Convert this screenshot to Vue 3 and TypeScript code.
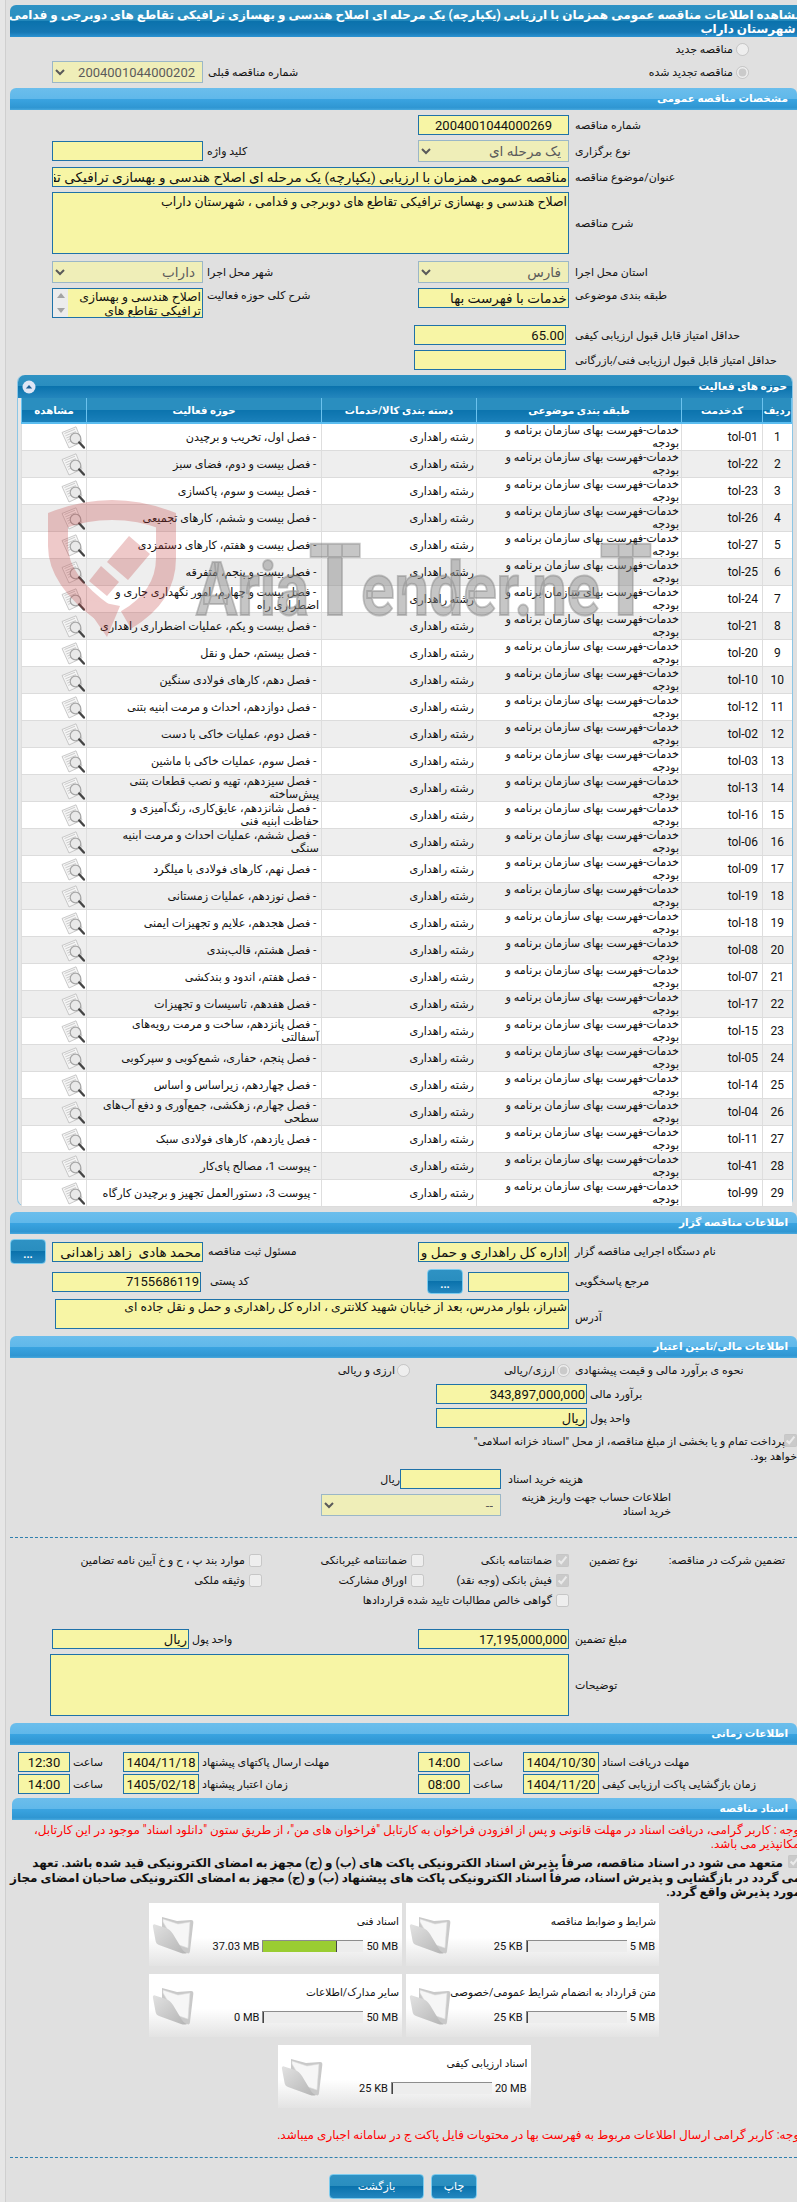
<script setup lang="ts">
const activities: [string, string][] = [
  ['tol-01', 'فصل اول، تخریب و برچیدن'],
  ['tol-22', 'فصل بیست و دوم، فضای سبز'],
  ['tol-23', 'فصل بیست و سوم، پاکسازی'],
  ['tol-26', 'فصل بیست و ششم، کارهای تجمیعی'],
  ['tol-27', 'فصل بیست و هفتم، کارهای دستمزدی'],
  ['tol-25', 'فصل بیست و پنجم، متفرقه'],
  ['tol-24', 'فصل بیست و چهارم، امور نگهداری جاری و اضطراری راه'],
  ['tol-21', 'فصل بیست و یکم، عملیات اضطراری راهداری'],
  ['tol-20', 'فصل بیستم، حمل و نقل'],
  ['tol-10', 'فصل دهم، کارهای فولادی سنگین'],
  ['tol-12', 'فصل دوازدهم، احداث و مرمت ابنیه بتنی'],
  ['tol-02', 'فصل دوم، عملیات خاکی با دست'],
  ['tol-03', 'فصل سوم، عملیات خاکی با ماشین'],
  ['tol-13', 'فصل سیزدهم، تهیه و نصب قطعات بتنی پیش‌ساخته'],
  ['tol-16', 'فصل شانزدهم، عایق‌کاری، رنگ‌آمیزی و حفاظت ابنیه فنی'],
  ['tol-06', 'فصل ششم،  عملیات احداث و مرمت ابنیه سنگی'],
  ['tol-09', 'فصل نهم، کارهای فولادی با میلگرد'],
  ['tol-19', 'فصل نوزدهم، عملیات زمستانی'],
  ['tol-18', 'فصل هجدهم، علایم و تجهیزات ایمنی'],
  ['tol-08', 'فصل هشتم، قالب‌بندی'],
  ['tol-07', 'فصل هفتم، اندود و بندکشی'],
  ['tol-17', 'فصل هفدهم، تاسیسات و تجهیزات'],
  ['tol-15', 'فصل پانزدهم، ساخت و مرمت رویه‌های آسفالتی'],
  ['tol-05', 'فصل پنجم، حفاری، شمع‌کوبی و سپرکوبی'],
  ['tol-14', 'فصل چهاردهم، زیراساس و اساس'],
  ['tol-04', 'فصل چهارم، زهکشی، جمع‌آوری و دفع آب‌های سطحی'],
  ['tol-11', 'فصل یازدهم، کارهای فولادی سبک'],
  ['tol-41', 'پیوست 1، مصالح پای‌کار'],
  ['tol-99', 'پیوست 3، دستورالعمل تجهیز و برچیدن کارگاه'],
]

const cards = [
  { title: 'شرایط و ضوابط مناقصه', max: '5 MB', val: '25 KB', pct: 1 },
  { title: 'اسناد فنی', max: '50 MB', val: '37.03 MB', pct: 74 },
  { title: 'متن قرارداد به انضمام شرایط عمومی/خصوصی', max: '5 MB', val: '25 KB', pct: 1 },
  { title: 'سایر مدارک/اطلاعات', max: '50 MB', val: '0 MB', pct: 0.5 },
  { title: 'اسناد ارزیابی کیفی', max: '20 MB', val: '25 KB', pct: 1 },
]

const onvan = 'مناقصه عمومی همزمان با ارزیابی (یکپارچه) یک مرحله ای اصلاح هندسی و بهسازی ترافیکی تقاطع های دوبرجی و فدامی ، شهرستان داراب'
const sharh = 'اصلاح هندسی و بهسازی ترافیکی تقاطع های دوبرجی و فدامی ، شهرستان داراب'
</script>

<template>
  <div class="page">
    <div class="main">
      <h1 class="title">مشاهده اطلاعات مناقصه عمومی همزمان با ارزیابی (یکپارچه) یک مرحله ای اصلاح هندسی و بهسازی ترافیکی تقاطع های دوبرجی و فدامی<br />، شهرستان داراب</h1>

      <div class="radio-line first"><input type="radio" disabled /><span>مناقصه جدید</span></div>
      <div class="prev-row">
        <div class="radio-line"><input type="radio" disabled checked /><span>مناقصه تجدید شده</span></div>
        <span class="prev-label">شماره مناقصه قبلی</span>
        <select class="sel" disabled><option>2004001044000202</option></select>
      </div>

      <h2 class="bar">مشخصات مناقصه عمومی</h2>

      <div class="grid mt5">
        <label class="lab">شماره مناقصه</label>
        <input class="f center" readonly value="2004001044000269" />
      </div>
      <div class="grid mt5 tall">
        <label class="lab">نوع برگزاری</label>
        <select class="sel ar" disabled><option>یک مرحله ای</option></select>
        <label class="lab l2">کلید واژه</label>
        <input class="f" readonly />
      </div>
      <div class="grid mt5">
        <label class="lab">عنوان/موضوع مناقصه</label>
        <input class="f ar wide" readonly :value="onvan" />
      </div>
      <div class="grid mt5">
        <label class="lab">شرح مناقصه</label>
        <textarea class="f wide area62" readonly :value="sharh"></textarea>
      </div>
      <div class="grid mt7 tall">
        <label class="lab">استان محل اجرا</label>
        <select class="sel ar" disabled><option>فارس</option></select>
        <label class="lab l2">شهر محل اجرا</label>
        <select class="sel ar" disabled><option>داراب</option></select>
      </div>
      <div class="grid mt5 top">
        <label class="lab lab-top">طبقه بندی موضوعی</label>
        <input class="f ar" readonly value="خدمات با فهرست بها" />
        <label class="lab l2 lab-top">شرح کلی حوزه فعالیت</label>
        <div class="listbox">
          <div class="listbox-text">اصلاح هندسی و بهسازی ترافیکی تقاطع های دوبرجی و فدامی</div>
          <div class="sb"><i class="up"></i><i class="down"></i></div>
        </div>
      </div>
      <div class="score mt7">
        <label class="lab">حداقل امتیاز قابل قبول ارزیابی کیفی</label>
        <input class="f ltrv" readonly value="65.00" />
      </div>
      <div class="score mt5">
        <label class="lab">حداقل امتیاز قابل قبول ارزیابی فنی/بازرگانی</label>
        <input class="f" readonly />
      </div>

      <section class="panel">
        <div class="panel-head">
          <span>حوزه های فعالیت</span>
          <svg class="collapse" viewBox="0 0 14 14" width="14" height="14"><circle cx="7" cy="7" r="6.500" fill="#dfe6f5" /><path d="M3.800 8.400 7 5l3.200 3.400z" fill="#1c5f96" /></svg>
        </div>
        <table class="tbl">
          <colgroup><col class="c1" /><col class="c2" /><col class="c3" /><col class="c4" /><col class="c5" /><col class="c6" /></colgroup>
          <thead>
            <tr><th>ردیف</th><th>کدخدمت</th><th>طبقه بندی موضوعی</th><th>دسته بندی کالا/خدمات</th><th>حوزه فعالیت</th><th>مشاهده</th></tr>
          </thead>
          <tbody>
            <tr v-for="(a, i) in activities" :key="a[0]">
              <td class="num">{{ i + 1 }}</td>
              <td class="code">{{ a[0] }}</td>
              <td class="txt cat">خدمات-فهرست بهای سازمان برنامه و بودجه</td>
              <td class="txt">رشته راهداری</td>
              <td class="txt act">&nbsp;- {{ a[1] }}</td>
              <td class="view">
                <svg viewBox="0 0 24 23" width="24" height="23">
                  <path d="M1 6.500 15 .8l6 15.200-13 6z" fill="#f5f5f5" stroke="#bcbcbc" stroke-width=".8" />
                  <path d="M3.500 7.500 14 3.200M4.400 9.800l10.500-4.300M5.300 12l4.700-1.900M6.200 14.200l3.600-1.500M7.100 16.400l3.400-1.400" stroke="#c2c2c2" stroke-width=".8" fill="none" />
                  <circle cx="14.500" cy="12.500" r="5.300" fill="#e6e6e6" fill-opacity=".85" stroke="#a6a6a6" stroke-width="1.200" />
                  <path d="m18.300 16.500 4.600 5" stroke="#454545" stroke-width="2.400" stroke-linecap="round" />
                </svg>
              </td>
            </tr>
          </tbody>
        </table>
      </section>

      <h2 class="bar mt6b">اطلاعات مناقصه گزار</h2>
      <div class="grid btn-grid buyer1">
        <label class="lab">نام دستگاه اجرایی مناقصه گزار</label>
        <input class="f ar" readonly value="اداره کل راهداری و حمل و نقل جاده ای فارس" />
        <label class="lab l3">مسئول ثبت مناقصه</label>
        <input class="f ar" readonly value="محمد هادی  زاهد زاهدانی" />
        <span></span>
        <button class="btn" type="button">...</button>
      </div>
      <div class="grid ref-grid">
        <label class="lab">مرجع پاسخگویی</label>
        <input class="f" readonly />
        <span></span>
        <button class="btn" type="button">...</button>
        <label class="lab l4">کد پستی</label>
        <input class="f ltrv" readonly value="7155686119" />
      </div>
      <div class="grid addr">
        <label class="lab lab-addr">آدرس</label>
        <textarea class="f wide area30" readonly>شیراز، بلوار مدرس، بعد از خیابان شهید کلانتری ، اداره کل راهداری و حمل و نقل جاده ای</textarea>
      </div>

      <h2 class="bar fin">اطلاعات مالی/تامین اعتبار</h2>
      <div class="est-row">
        <label class="lab est-lab">نحوه ی برآورد مالی و قیمت پیشنهادی</label>
        <span class="choice c-a"><input type="radio" disabled checked /><span>ارزی/ریالی</span></span>
        <span class="choice c-b"><input type="radio" disabled /><span>ارزی و ریالی</span></span>
      </div>
      <div class="money mt-b">
        <label class="lab">برآورد مالی</label>
        <input class="f ltrv" readonly value="343,897,000,000" />
      </div>
      <div class="money mt4">
        <label class="lab">واحد پول</label>
        <input class="f" readonly value="ریال" />
      </div>
      <div class="treasury">
        <input type="checkbox" disabled checked />
        <span>پرداخت تمام و یا بخشی از مبلغ مناقصه، از محل "اسناد خزانه اسلامی"<br />خواهد بود.</span>
      </div>
      <div class="fee">
        <label class="lab">هزینه خرید اسناد</label>
        <input class="f" readonly />
        <span class="unit">ریال</span>
      </div>
      <div class="fee acc">
        <label class="lab acc-lab">اطلاعات حساب جهت واریز هزینه خرید اسناد</label>
        <select class="sel" disabled><option>--</option></select>
      </div>
      <div class="dash first-dash"></div>

      <div class="guar">
        <span class="g-a">تضمین شرکت در مناقصه:</span>
        <span class="g-b">نوع تضمین</span>
        <span class="chk"><input type="checkbox" disabled checked /><span>ضمانتنامه بانکی</span></span>
        <span class="chk"><input type="checkbox" disabled /><span>ضمانتنامه غیربانکی</span></span>
        <span class="chk"><input type="checkbox" disabled /><span>موارد بند پ ، ح و خ آیین نامه تضامین</span></span>

        <span></span><span></span>
        <span class="chk"><input type="checkbox" disabled checked /><span>فیش بانکی (وجه نقد)</span></span>
        <span class="chk"><input type="checkbox" disabled /><span>اوراق مشارکت</span></span>
        <span class="chk"><input type="checkbox" disabled /><span>وثیقه ملکی</span></span>

        <span></span><span></span>
        <span class="chk span3"><input type="checkbox" disabled /><span>گواهی خالص مطالبات تایید شده قراردادها</span></span>
      </div>

      <div class="amount">
        <label class="lab">مبلغ تضمین</label>
        <input class="f ltrv" readonly value="17,195,000,000" />
        <label class="lab l5">واحد پول</label>
        <input class="f" readonly value="ریال" />
      </div>
      <div class="grid mt5">
        <label class="lab">توضیحات</label>
        <textarea class="f notes" readonly></textarea>
      </div>

      <h2 class="bar time-bar">اطلاعات زمانی</h2>
      <div class="times first-time">
        <label class="lab">مهلت دریافت اسناد</label><input class="f center" readonly value="1404/10/30" />
        <span class="sa">ساعت</span><input class="f center" readonly value="14:00" />
        <label class="lab">مهلت ارسال پاکتهای پیشنهاد</label><input class="f center" readonly value="1404/11/18" />
        <span class="sa">ساعت</span><input class="f center" readonly value="12:30" />
      </div>
      <div class="times mt2">
        <label class="lab">زمان بازگشایی پاکت ارزیابی کیفی</label><input class="f center" readonly value="1404/11/20" />
        <span class="sa">ساعت</span><input class="f center" readonly value="08:00" />
        <label class="lab">زمان اعتبار پیشنهاد</label><input class="f center" readonly value="1405/02/18" />
        <span class="sa">ساعت</span><input class="f center" readonly value="14:00" />
      </div>

      <h2 class="bar docs-bar">اسناد مناقصه</h2>
      <p class="red first-red">توجه : کاربر گرامی، دریافت اسناد در مهلت قانونی و پس از افزودن فراخوان به کارتابل "فراخوان های من"، از طریق ستون "دانلود اسناد" موجود در این کارتابل،<br />امکانپذیر می باشد.</p>
      <p class="pledge"><input type="checkbox" disabled checked /> متعهد می شود در اسناد مناقصه، صرفاً پذیرش اسناد الکترونیکی پاکت های (ب) و (ج) مجهز به امضای الکترونیکی قید شده باشد. تعهد<br />می گردد در بازگشایی و پذیرش اسناد، صرفاً اسناد الکترونیکی پاکت های پیشنهاد (ب) و (ج) مجهز به امضای الکترونیکی صاحبان امضای مجاز<br />مورد پذیرش واقع گردد.</p>

      <div class="cards">
        <div v-for="c in cards" :key="c.title" class="card">
          <div class="card-title">{{ c.title }}</div>
          <div class="card-row">
            <span class="cv">{{ c.max }}</span>
            <span class="meter"><span class="fill" :style="{ width: c.pct + '%' }"></span></span>
            <span class="cv">{{ c.val }}</span>
          </div>
          <svg class="folder" viewBox="0 0 42 38" width="42" height="38">
            <defs>
              <linearGradient id="fa" x1="0" y1="0" x2="1" y2="1"><stop offset="0" stop-color="#e2e2e2" /><stop offset="1" stop-color="#b4b4b4" /></linearGradient>
            </defs>
            <path d="M10 1 25 5l14-1c2 0 2.500 1 2.300 3L38 35c-.3 2-1 3-3 2l-8-2L10 18z" fill="#c9c9c9" />
            <path d="M11 3 26 8l12-2-2 26-12-4-13-22z" fill="#f6f6f6" stroke="#dcdcdc" stroke-width=".6" />
            <path d="M1 11c-.5-2 .5-3 2-2.600L14 12c3 1 5 3 7 6l9 15c1 2 3 3 5 4-2 1-4 .6-6 0L7 29c-2-.7-3-2-3.400-4z" fill="url(#fa)" />
          </svg>
        </div>
      </div>

      <p class="red second-red">توجه: کاربر گرامی ارسال اطلاعات مربوط به فهرست بها در محتویات فایل پاکت ج در سامانه اجباری میباشد.</p>
      <div class="dash second-dash"></div>
      <div class="actions">
        <button class="btn2 print" type="button">چاپ</button>
        <button class="btn2 back" type="button">بازگشت</button>
      </div>
    </div>

    <div class="wm" aria-hidden="true">
      <svg class="wm-shield" viewBox="0 0 130 140" width="130" height="140">
        <path d="M58 116C30 96 11 74 11 48V22Q65 2 119 22V60c0 28-16 48-40 62" fill="none" stroke="#c23a3a" stroke-width="20" />
        <path d="m33 100 40 8-13 31z" fill="#c23a3a" />
        <path d="m82 38 21 18-22 26-21-18zM54 68l18 16-12 14-18-15z" fill="#c23a3a" />
      </svg>
      <span class="wm-text">Aria<b>T</b>ender.ne<b>T</b></span>
    </div>
  </div>
</template>

<style>
html, body { margin: 0; padding: 0; background: #e0e0e0; }
</style>

<style scoped>
.page {
  position: relative;
  width: 797px;
  height: 2202px;
  overflow: hidden;
  background: #e6e6e6;
  font-family: Roboto, "DejaVu Sans", sans-serif;
  font-size: 11px;
  color: #111;
}
.main {
  box-sizing: border-box;
  direction: rtl;
  margin-left: 5px;
  width: 792px;
  height: 2202px;
  padding: 5px 0 0 4px;
  border-left: 1px solid #cfcfcf;
  background: #e0e0e0;
}
h1, h2, p { margin: 0; }

.title {
  box-sizing: border-box;
  height: 32px;
  margin-right: -8px;
  padding: 3px 2px 0 0;
  color: #fff;
  font-size: 12px;
  line-height: 14px;
  font-weight: bold;
  white-space: nowrap;
  overflow: hidden;
  border-radius: 6px 6px 0 0;
  background: linear-gradient(#2e92c4 0, #2a8ebf 48%, #0a72ac 50%, #1678b4 85%, #2c93d2 100%);
}
.bar {
  box-sizing: border-box;
  height: 22px;
  padding: 4px 9px 0 0;
  color: #fff;
  font-size: 10.500px;
  line-height: 13px;
  font-weight: bold;
  border-radius: 6px 6px 0 0;
  background: linear-gradient(#6bbeec 0, #60b8ea 48%, #3aa4e1 50%, #2f96d2 90%, #49a9de 100%);
}

.radio-line { display: flex; align-items: center; height: 20px; }
.radio-line input { margin: 0 48px 0 3px; width: 13px; height: 13px; }
.radio-line.first { margin-top: 2px; }
.prev-row { display: flex; align-items: center; height: 22px; margin: 2px 0 5px; }
.prev-row .radio-line { width: 388px; flex: none; }
.prev-label { width: 206px; flex: none; text-align: left; padding-left: 5px; box-sizing: border-box; }
.prev-row .sel { width: 151px; flex: none; }

.grid {
  display: grid;
  grid-template-columns: 228px 151px 215px 151px;
  align-items: center;
}
.tall { min-height: 22px; }
.top { align-items: start; }
.mt2 { margin-top: 2px; }
.mt4 { margin-top: 4px; }
.mt5 { margin-top: 5px; }
.mt7 { margin-top: 7px; }

.lab { box-sizing: border-box; text-align: left; padding-left: 6px; white-space: nowrap; }
.l2 { padding-left: 4px; }
.lab-top { padding-top: 1px; }

.f {
  box-sizing: border-box;
  width: 100%;
  height: 20px;
  margin: 0;
  padding: 0 1px;
  border: 1px solid #1f72a8;
  border-radius: 0;
  background: #f7f5a5;
  color: #111;
  font: 13px/17px Roboto, "DejaVu Sans", sans-serif;
  direction: rtl;
  outline: none;
  resize: none;
  display: block;
}
.ar { font-size: 13.600px; }
.center { text-align: center; }
.ltrv { text-align: right; }
.wide { grid-column: 2 / 5; }
.area62 { height: 62px; overflow: hidden; font-size: 12.500px; }
.area30 { height: 30px; overflow: hidden; line-height: 15px; font-size: 12.300px; }
.notes { grid-column: 2 / 5; width: 519px; height: 62px; }

.listbox {
  box-sizing: border-box;
  display: flex;
  height: 30px;
  border: 1px solid #1f72a8;
  background: #f7f5a5;
  overflow: hidden;
}
.listbox-text { flex: 1; min-width: 0; font-size: 12.400px; line-height: 14px; padding: 1px 1px 0 0; }
.sb {
  flex: none;
  width: 15px;
  background: #ececec;
  display: flex;
  flex-direction: column;
  justify-content: space-between;
  align-items: center;
  padding: 4px 0;
  box-sizing: border-box;
}
.sb i { display: block; width: 0; height: 0; border-left: 4px solid transparent; border-right: 4px solid transparent; }
.sb .up { border-bottom: 5px solid #a3a3a3; }
.sb .down { border-top: 5px solid #a3a3a3; }

.sel {
  box-sizing: border-box;
  width: 100%;
  height: 22px;
  margin: 0;
  padding: 0 3px;
  border: 1px solid #7fa6bd;
  border-radius: 0;
  background-color: #f6f4a8;
  color: #222;
  font: 13px Roboto, "DejaVu Sans", sans-serif;
  direction: rtl;
}
.sel.ar { font-size: 13.600px; }

.score { display: grid; grid-template-columns: 231px 152px; align-items: center; }
.score .lab { padding-left: 9px; }

/* activity panel */
.panel {
  box-sizing: border-box;
  margin: 5px 4px 0 0;
  width: 776px;
  height: 831px;
  padding: 0 0 0 4px;
  border: 1px solid #8cc6e6;
  border-top: 0;
  border-radius: 7px;
  background: #e6e6e6;
}
.panel-head {
  height: 23px;
  margin-left: -4px;
  padding: 0 5px 0 0;
  display: flex;
  justify-content: space-between;
  align-items: center;
  color: #fff;
  font-weight: bold;
  font-size: 10.500px;
  border-radius: 7px 7px 0 0;
  background: linear-gradient(#2f92c3 0, #2a8ebf 48%, #0b73ad 50%, #2486bd 100%);
}
.collapse { margin-left: 4px; }
.tbl {
  border-collapse: collapse;
  table-layout: fixed;
  width: 770px;
  background: #fff;
}
.c1 { width: 29px; }
.c2 { width: 81px; }
.c3 { width: 205px; }
.c4 { width: 155px; }
.c5 { width: 235px; }
.c6 { width: 65px; }
.tbl th {
  height: 24px;
  padding: 0;
  color: #fff;
  font-size: 10.200px;
  font-weight: bold;
  border-left: 1px solid #6cc2ee;
  border-right: 1px solid #6cc2ee;
  border-bottom: 2px solid #5bbdf0;
  background: linear-gradient(#2a8ebf 0, #2a8ebf 48%, #0b73ad 50%, #1a80ba 100%);
}
.tbl td {
  height: 26px;
  padding: 0 2px;
  border-bottom: 1px solid #dcdcdc;
  border-left: 1px solid #dedede;
  font-size: 11.200px;
  line-height: 13px;
  overflow: hidden;
}
.tbl tbody tr:nth-child(even) td { background: #eee; }
.tbl .num { text-align: center; font-size: 12px; padding: 0; }
.tbl .code { text-align: right; font-size: 12px; padding-right: 4px; direction: ltr; }
.tbl .cat { padding-left: 24px; }
.tbl .act { padding-left: 6px; }
.tbl .view { padding: 0; }
.view svg { display: block; margin-right: 1px; }

/* buyer */
.btn {
  box-sizing: border-box;
  height: 25px;
  width: 36px;
  padding: 6px 0 0;
  border: 1px solid #7ccbee;
  border-radius: 4px;
  color: #fff;
  font: bold 11px Roboto, sans-serif;
  background: linear-gradient(#2e92c4 0, #2a8ebf 48%, #0a72ac 50%, #2487bf 100%);
}
.mt6b { margin-top: 6px; }
.btn-grid { grid-template-columns: 228px 151px 215px 151px 6px 36px; height: 25px; margin-top: 5px; }
.ref-grid { grid-template-columns: 228px 101px 5px 37px 225px 149px; height: 25px; margin-top: 5px; }
.l3 { padding-left: 5px; }
.l4 { padding-left: 9px; }
.addr { grid-template-columns: 228px 514px; margin-top: 5px; }
.addr .wide { grid-column: 2; }
.lab-addr { padding-top: 6px; }
.fin { margin-top: 7px; }

.est-row { display: flex; align-items: center; height: 20px; margin-top: 2px; }
.est-lab { width: 222px; padding-left: 0; flex: none; }
.choice { display: inline-flex; align-items: center; }
.choice input { margin: 0 0 0 2px; width: 13px; height: 13px; }
.c-a { margin-right: 5px; width: 160px; }

.money { display: grid; grid-template-columns: 210px 151px; align-items: center; }
.money .lab { padding-left: 3px; }
.mt-b { margin-top: 4px; }

.treasury { width: 364px; margin-top: 6px; line-height: 15px; white-space: nowrap; }
.treasury input { margin: 0 0 0 -1px; vertical-align: -2px; width: 13px; height: 13px; }

.fee { display: flex; align-items: center; margin-top: 5px; }
.fee .lab { width: 296px; padding-left: 7px; flex: none; }
.fee .f { width: 101px; flex: none; }
.acc { margin-top: 2px; }
.acc .lab.acc-lab { white-space: normal; padding-right: 126px; line-height: 14px; text-align: right; }
.acc .sel { width: 180px; }
.dash { border-top: 1px dashed #2f7fae; height: 0; }
.first-dash { margin-top: 18px; }

.guar {
  display: grid;
  grid-template-columns: 144px 84px 145px 162px 200px;
  grid-auto-rows: 20px;
  margin-top: 12px;
  align-items: center;
}
.g-a { padding-right: 12px; white-space: nowrap; }
.g-b { text-align: left; padding-left: 20px; white-space: nowrap; }
.chk { display: inline-flex; align-items: center; white-space: nowrap; }
.chk input { margin: 0 0 0 4px; width: 13px; height: 13px; }
.span3 { grid-column: span 3; }

.amount { display: grid; grid-template-columns: 228px 151px 229px 137px; align-items: center; margin-top: 19px; }
.l5 { padding-left: 3px; }

.time-bar { margin-top: 7px; }
.times {
  display: grid;
  grid-template-columns: 198px 76px 53px 52px 219px 76px 53px 52px;
  align-items: center;
}
.times .lab { padding-left: 3px; }
.first-time { margin-top: 7px; }
.sa { text-align: left; padding-left: 3px; }
.docs-bar { margin: 4px 0 0 2px; }

.red { color: #f00; font-size: 12px; line-height: 13.500px; white-space: nowrap; }
.first-red { margin: 4px -6px 0 0; }
.pledge { margin: 4px -4px 0 0; font-size: 12px; font-weight: bold; line-height: 14.500px; white-space: nowrap; }
.pledge input { margin: 0 0 0 2px; width: 13px; height: 13px; vertical-align: -1px; }

.cards {
  display: flex;
  flex-wrap: wrap;
  justify-content: center;
  gap: 8px 4px;
  width: 510px;
  margin: 3px 138px 0 0;
}
.card {
  position: relative;
  box-sizing: border-box;
  width: 253px;
  height: 63px;
  padding: 12px 3px 0;
  background: linear-gradient(#fff 0, #fff 55%, #e3e3e3 100%);
}
.card-title { font-size: 10.500px; line-height: 13px; height: 25px; }
.card-row { display: flex; align-items: center; gap: 3px; padding-right: 1px; }
.cv { font-size: 11px; direction: ltr; unicode-bidi: isolate; }
.meter {
  display: block;
  direction: ltr;
  box-sizing: border-box;
  width: 101px;
  height: 12px;
  background: #ededed;
  border-top: 1px solid #8d8d8d;
}
.fill { display: block; height: 11px; background: #9acd32; border-right: 1px solid #444; box-sizing: border-box; border-left: 1px solid #888; }
.folder { position: absolute; left: 3px; top: 13px; }

.second-red { margin: 21px -6px 0 0; }
.second-dash { margin-top: 15px; }
.actions { display: flex; gap: 7px; margin: 16px 320px 0 0; }
.btn2 {
  box-sizing: border-box;
  height: 25px;
  border: 1px solid #7ccbee;
  border-radius: 4px;
  color: #fff;
  font: 11px Roboto, "DejaVu Sans", sans-serif;
  padding: 0;
  background: linear-gradient(#2e92c4 0, #2a8ebf 48%, #0a72ac 50%, #2487bf 100%);
}
.print { width: 46px; }
.back { width: 95px; }

/* watermark */
.wm { position: absolute; left: 0; top: 0; pointer-events: none; }
.wm-shield { position: absolute; left: 47px; top: 498px; opacity: .27; }
.wm-text {
  position: absolute;
  left: 196px;
  top: 536px;
  color: rgba(135, 135, 135, .48);
  -webkit-text-stroke: 2px rgba(135, 135, 135, .48);
  font: bold 74px/90px Roboto, sans-serif;
  white-space: nowrap;
  transform: scaleX(.83);
  transform-origin: left top;
  direction: ltr;
}
.wm-text b { font-size: 100px; line-height: 90px; }
</style>
